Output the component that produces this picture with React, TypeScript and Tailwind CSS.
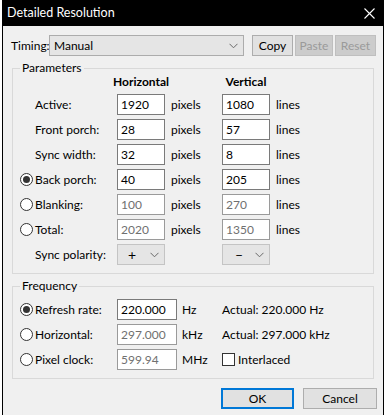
import { ReactNode } from 'react'

const font = { fontFamily: 'Lato, "Liberation Sans", sans-serif' }

function Radio({ checked }: { checked?: boolean }) {
  return (
    <span className="w-[13px] h-[13px] rounded-full border border-[#333333] bg-white flex items-center justify-center">
      {checked && <span className="w-[7px] h-[7px] rounded-full bg-[#333333]" />}
    </span>
  )
}

function Field({ value, disabled, w = 'w-[48px]' }: { value: string; disabled?: boolean; w?: string }) {
  return (
    <div
      className={`${w} h-[21px] border bg-white flex items-center pl-[3px] ${
        disabled ? 'border-[#9a9a9a] text-[#707070]' : 'border-[#7a7a7a] text-black'
      }`}
    >
      {value}
    </div>
  )
}

function Chevron() {
  return (
    <svg width="9" height="6" viewBox="0 0 9 6" fill="none">
      <path d="M0.5 0.8 L4.5 4.8 L8.5 0.8" stroke="#6a6a6a" strokeWidth="1" />
    </svg>
  )
}

function Group({ title, children, className }: { title: string; children: ReactNode; className?: string }) {
  return (
    <fieldset className={`mx-[9px] border border-[#d9d9d9] ${className ?? ''}`}>
      <legend className="ml-[7px] px-[2px] leading-[14px]">{title}</legend>
      {children}
    </fieldset>
  )
}

function ParamRow({ label, radio, h, v, hDis, vDis }: { label: string; radio?: 'on' | 'off'; h: string; v: string; hDis?: boolean; vDis?: boolean }) {
  return (
    <div className="flex items-center h-[21px] pl-[7px]">
      <div className="w-[15px] flex">{radio && <Radio checked={radio === 'on'} />}</div>
      <div className="w-[82px]">{label}</div>
      <Field value={h} disabled={hDis} />
      <div className="w-[57px] pl-[6px]">pixels</div>
      <Field value={v} disabled={vDis} />
      <div className="pl-[6px]">lines</div>
    </div>
  )
}

function FreqRow({ label, checked, value, unit, disabled, right }: { label: string; checked?: boolean; value: string; unit: string; disabled?: boolean; right: ReactNode }) {
  return (
    <div className="flex items-center h-[21px] pl-[7px]">
      <div className="w-[15px] flex"><Radio checked={checked} /></div>
      <div className="w-[82px]">{label}</div>
      <Field value={value} disabled={disabled} w="w-[60px]" />
      <div className="w-[45px] pl-[5px]">{unit}</div>
      {right}
    </div>
  )
}

export default function App() {
  return (
    <div className="w-[386px] h-[415px] bg-white flex overflow-hidden text-[12px] text-black" style={font}>
      <div className="ml-[2px] w-[382px] h-full flex flex-col bg-[#f0f0f0] border-x border-black">
        <div className="h-[26px] bg-black text-white flex items-center justify-between pl-[4px] pr-[8px] shrink-0">
          <span className="text-[12.5px]">Detailed Resolution</span>
          <svg width="11" height="11" viewBox="0 0 11 11">
            <path d="M0.5 0.5 L10.5 10.5 M10.5 0.5 L0.5 10.5" stroke="white" strokeWidth="1.1" />
          </svg>
        </div>

        <div className="flex items-center mt-[9px] pl-[8px] h-[21px]">
          <div className="w-[38px]">Timing:</div>
          <div className="w-[195px] h-[21px] border border-[#acacac] bg-[#e5e5e5] flex items-center justify-between pl-[4px] pr-[5px]">
            <span>Manual</span>
            <Chevron />
          </div>
          <button className="ml-[8px] w-[41px] h-[21px] border border-[#adadad] bg-[#e1e1e1]">Copy</button>
          <button className="ml-[2px] w-[38px] h-[21px] border border-[#bfbfbf] bg-[#cccccc] text-[#9a9a9a]">Paste</button>
          <button className="ml-[2px] w-[41px] h-[21px] border border-[#bfbfbf] bg-[#cccccc] text-[#9a9a9a]">Reset</button>
        </div>

        <Group title="Parameters" className="mt-[5px] pb-[8px]">
          <div className="flex items-center h-[14px] pl-[104px] font-bold">
            <div className="w-[48px] flex justify-center whitespace-nowrap">Horizontal</div>
            <div className="w-[57px]" />
            <div className="w-[48px] flex justify-center whitespace-nowrap">Vertical</div>
          </div>
          <div className="flex flex-col gap-[4px] mt-[5px]">
            <ParamRow label="Active:" h="1920" v="1080" />
            <ParamRow label="Front porch:" h="28" v="57" />
            <ParamRow label="Sync width:" h="32" v="8" />
            <ParamRow label="Back porch:" radio="on" h="40" v="205" />
            <ParamRow label="Blanking:" radio="off" h="100" v="270" hDis vDis />
            <ParamRow label="Total:" radio="off" h="2020" v="1350" hDis vDis />
            <div className="flex items-center h-[21px] pl-[7px]">
              <div className="w-[15px]" />
              <div className="w-[82px]">Sync polarity:</div>
              <div className="w-[48px] h-[21px] border border-[#c4c4c4] bg-[#e5e5e5] flex items-center justify-between pl-[10px] pr-[5px]">
                <span className="text-[14px] leading-none">+</span>
                <Chevron />
              </div>
              <div className="w-[57px]" />
              <div className="w-[48px] h-[21px] border border-[#c4c4c4] bg-[#e5e5e5] flex items-center justify-between pl-[12px] pr-[5px]">
                <span className="text-[14px] leading-none">–</span>
                <Chevron />
              </div>
            </div>
          </div>
        </Group>

        <Group title="Frequency" className="mt-[5px] pb-[8px]">
          <div className="flex flex-col gap-[4px] mt-[6px]">
            <FreqRow label="Refresh rate:" checked value="220.000" unit="Hz" right={<span>Actual: 220.000 Hz</span>} />
            <FreqRow label="Horizontal:" value="297.000" unit="kHz" disabled right={<span>Actual: 297.000 kHz</span>} />
            <FreqRow
              label="Pixel clock:"
              value="599.94"
              unit="MHz"
              disabled
              right={
                <div className="flex items-center">
                  <span className="w-[13px] h-[13px] border border-[#333333] bg-white" />
                  <span className="ml-[3px]">Interlaced</span>
                </div>
              }
            />
          </div>
        </Group>

        <div className="flex justify-end gap-[9px] mt-[9px] pr-[6px]">
          <button className="w-[73px] h-[21px] border-2 border-[#0078d7] bg-[#e1e1e1]">OK</button>
          <button className="w-[74px] h-[21px] border border-[#adadad] bg-[#e1e1e1]">Cancel</button>
        </div>
      </div>
    </div>
  )
}
